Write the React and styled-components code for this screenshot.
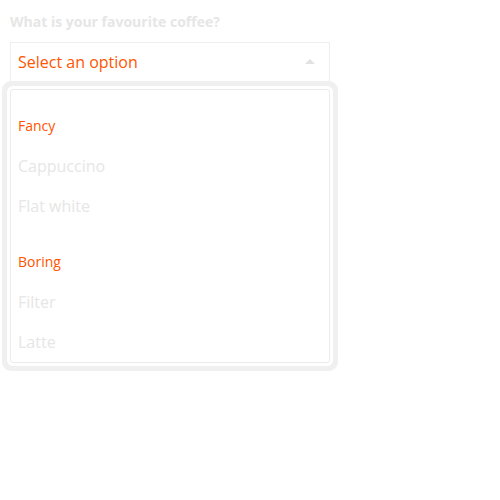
import React from "react";
import styled, { createGlobalStyle } from "styled-components";

const Global = createGlobalStyle`
  html, body { margin: 0; padding: 0; background: #fff; }
  body { font-family: "Open Sans", "Noto Sans", sans-serif; }
`;

const Page = styled.div`
  padding: 12px 10px;
  width: 320px;
`;

const Label = styled.div`
  font-size: 14px;
  line-height: 20px;
  font-weight: 700;
  color: #e6e6e6;
  margin-bottom: 10px;
`;

const SelectBox = styled.div`
  box-sizing: border-box;
  height: 40px;
  border: 1px solid #eeeeee;
  display: flex;
  align-items: center;
  justify-content: space-between;
  padding: 0 14px 0 7px;
  font-size: 16px;
  color: #ff5500;
`;

const Arrow = styled.span`
  width: 0;
  height: 0;
  border-left: 5px solid transparent;
  border-right: 5px solid transparent;
  border-bottom: 5px solid #e2e2e2;
  margin-top: -2px;
`;

const ListWrap = styled.div`
  margin-top: 7px;
  border: 1px solid #ececec;
  border-radius: 3px;
  box-shadow: 0 0 0 3px #ffffff, 0 0 0 8px #f0f0f0;
`;

const Group = styled.div`
  padding-top: 16px;
`;

const GroupLabel = styled.div`
  box-sizing: border-box;
  height: 40px;
  display: flex;
  align-items: center;
  padding: 0 0 2px 7px;
  font-size: 14px;
  color: #ff5500;
`;

const Option = styled.div`
  height: 40px;
  display: flex;
  align-items: center;
  padding-left: 7px;
  font-size: 16px;
  color: #e6e6e6;
`;

const groups = [
  { label: "Fancy", options: ["Cappuccino", "Flat white"] },
  { label: "Boring", options: ["Filter", "Latte"] },
];

export default function App() {
  return (
    <>
      <Global />
      <Page>
        <Label>What is your favourite coffee?</Label>
        <SelectBox>
          <span>Select an option</span>
          <Arrow />
        </SelectBox>
        <ListWrap>
          {groups.map((g) => (
            <Group key={g.label}>
              <GroupLabel>{g.label}</GroupLabel>
              {g.options.map((o) => (
                <Option key={o}>{o}</Option>
              ))}
            </Group>
          ))}
        </ListWrap>
      </Page>
    </>
  );
}
